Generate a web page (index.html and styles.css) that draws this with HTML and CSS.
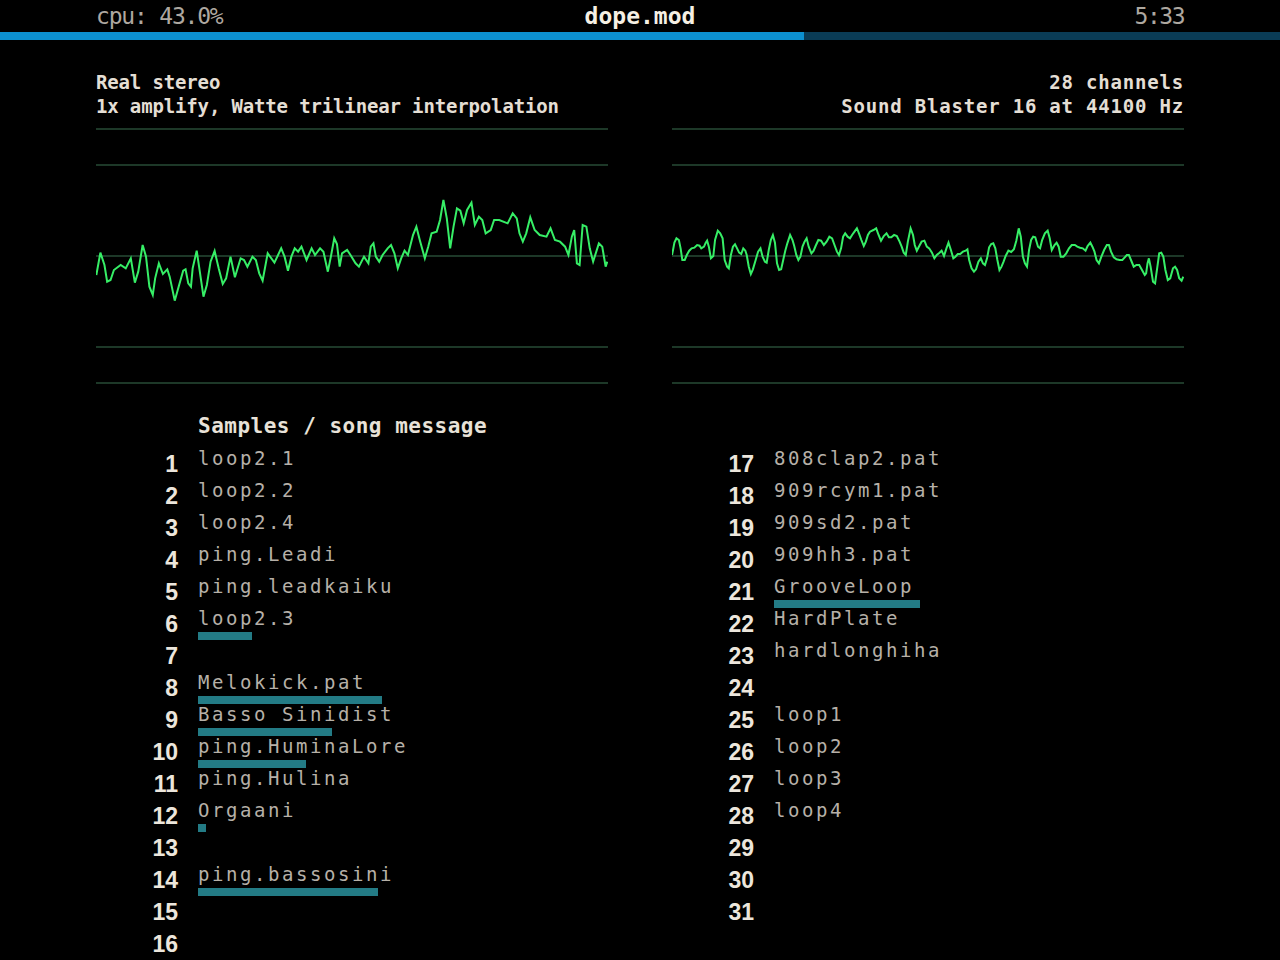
FILE: index.html
```html
<!DOCTYPE html>
<html lang="en">
<head>
<meta charset="utf-8">
<title>dope.mod</title>
<link rel="stylesheet" href="styles.css">
</head>
<body>
<header class="topbar">
  <span class="cpu">cpu: 43.0%</span>
  <span class="song">dope.mod</span>
  <span class="time">5:33</span>
</header>
<div class="progress"><div class="progress-fill" style="width:804px"></div></div>

<section class="info">
  <div class="info-left">
    <div>Real stereo</div>
    <div>1x amplify, Watte trilinear interpolation</div>
  </div>
  <div class="info-right">
    <div>28 channels</div>
    <div>Sound Blaster 16 at 44100 Hz</div>
  </div>
</section>

<section class="scopes">
  <svg class="scope" width="512" height="280" viewBox="47 0 1515 840" preserveAspectRatio="none">
    <g class="grid">
      <line x1="47" x2="1562" y1="27" y2="27"/>
      <line x1="47" x2="1562" y1="135" y2="135"/>
      <line x1="47" x2="1562" y1="408" y2="408"/>
      <line x1="47" x2="1562" y1="681" y2="681"/>
      <line x1="47" x2="1562" y1="789" y2="789"/>
    </g>
    <polyline class="wave" points="48,465 60,398 72,435 80,485 90,480 100,450 120,435 135,445 150,415 162,488 172,455 185,375 195,410 205,500 215,525 222,475 233,430 245,462 258,448 265,470 280,542 293,495 305,452 312,448 320,490 328,500 333,445 345,392 352,440 365,530 375,495 386,425 398,393 410,445 422,492 432,475 445,410 458,472 475,415 485,420 495,440 510,410 520,420 530,460 540,482 555,400 575,428 595,385 605,410 615,452 625,410 635,385 645,395 655,380 670,420 685,385 695,405 710,385 720,395 733,455 742,410 752,355 760,372 768,440 775,400 790,390 800,405 815,430 825,440 840,410 853,430 860,380 868,370 875,410 885,425 895,405 910,385 920,375 930,400 940,445 950,415 960,392 970,405 985,345 995,320 1005,360 1020,415 1030,380 1040,340 1055,335 1065,300 1075,240 1085,295 1095,385 1105,320 1115,265 1125,272 1135,310 1145,270 1158,248 1168,315 1180,290 1190,300 1200,340 1215,330 1225,300 1240,300 1265,310 1280,280 1292,295 1300,340 1310,365 1320,340 1332,292 1345,330 1360,345 1380,350 1392,325 1405,360 1420,365 1435,380 1445,405 1455,350 1462,330 1470,430 1478,435 1487,315 1498,320 1508,385 1518,425 1535,370 1545,380 1555,440 1560,425"/>
  </svg>
  <svg class="scope" width="512" height="280" viewBox="35 0 1487 840" preserveAspectRatio="none">
    <g class="grid">
      <line x1="35" x2="1522" y1="27" y2="27"/>
      <line x1="35" x2="1522" y1="135" y2="135"/>
      <line x1="35" x2="1522" y1="408" y2="408"/>
      <line x1="35" x2="1522" y1="681" y2="681"/>
      <line x1="35" x2="1522" y1="789" y2="789"/>
    </g>
    <polyline class="wave" points="35,405 38,390 42,368 48,355 55,360 60,385 65,420 72,420 78,405 85,392 92,385 100,383 108,375 115,377 120,385 128,380 133,368 137,362 142,380 148,415 155,408 160,360 168,332 175,340 182,355 188,420 195,440 200,445 206,405 212,380 218,373 224,385 230,398 236,402 242,385 248,392 252,405 258,440 264,462 270,448 278,420 285,395 292,385 298,410 305,425 310,428 316,390 322,360 328,345 334,368 340,430 346,450 352,448 358,420 364,392 370,370 378,345 385,360 390,378 396,405 402,420 408,410 414,380 420,365 426,355 432,380 440,400 446,393 452,378 460,360 468,362 476,375 484,365 492,350 500,355 508,378 514,395 520,405 526,385 532,350 538,340 545,350 552,355 558,345 565,335 572,325 578,340 585,360 592,378 598,365 604,345 610,335 620,330 628,325 635,345 642,362 650,348 658,340 665,352 672,352 680,345 688,348 696,365 702,380 708,398 714,405 720,365 728,325 735,345 740,375 746,392 752,380 760,365 768,362 775,380 782,385 790,398 797,415 804,405 812,398 818,392 825,408 832,385 838,368 845,390 852,415 858,410 865,402 872,402 880,395 888,392 893,388 898,420 905,445 912,455 918,448 925,425 932,415 938,430 944,435 950,415 956,382 962,372 968,370 974,385 980,420 986,450 992,440 998,425 1004,408 1012,392 1020,396 1028,388 1035,362 1042,325 1048,350 1054,410 1060,430 1066,440 1072,390 1078,360 1084,350 1090,352 1098,380 1104,385 1110,360 1118,340 1126,332 1132,355 1138,390 1146,375 1152,368 1158,380 1164,410 1172,410 1180,400 1188,385 1196,375 1205,375 1212,380 1220,383 1228,385 1236,392 1242,378 1250,368 1256,380 1262,395 1268,420 1275,430 1282,410 1290,390 1298,375 1304,375 1310,395 1318,412 1326,418 1335,420 1343,420 1350,412 1356,405 1362,405 1368,420 1376,440 1384,435 1392,435 1400,450 1408,465 1412,460 1416,430 1420,415 1425,440 1432,485 1438,490 1444,445 1450,400 1456,398 1462,410 1468,450 1475,480 1482,475 1490,445 1496,440 1502,450 1508,475 1515,482 1520,470"/>
  </svg>
</section>

<section class="samples">
  <div class="samples-title">Samples / song message</div>
  <div class="columns">
    <ol class="col">
      <li class="row"><span class="num">1</span><div class="cell"><div class="name">loop2.1</div></div></li>
      <li class="row"><span class="num">2</span><div class="cell"><div class="name">loop2.2</div></div></li>
      <li class="row"><span class="num">3</span><div class="cell"><div class="name">loop2.4</div></div></li>
      <li class="row"><span class="num">4</span><div class="cell"><div class="name">ping.Leadi</div></div></li>
      <li class="row"><span class="num">5</span><div class="cell"><div class="name">ping.leadkaiku</div></div></li>
      <li class="row"><span class="num">6</span><div class="cell"><div class="name">loop2.3</div><div class="bar" style="width:54px"></div></div></li>
      <li class="row"><span class="num">7</span><div class="cell"><div class="name"></div></div></li>
      <li class="row"><span class="num">8</span><div class="cell"><div class="name">Melokick.pat</div><div class="bar" style="width:184px"></div></div></li>
      <li class="row"><span class="num">9</span><div class="cell"><div class="name">Basso Sinidist</div><div class="bar" style="width:134px"></div></div></li>
      <li class="row"><span class="num">10</span><div class="cell"><div class="name">ping.HuminaLore</div><div class="bar" style="width:108px"></div></div></li>
      <li class="row"><span class="num">11</span><div class="cell"><div class="name">ping.Hulina</div></div></li>
      <li class="row"><span class="num">12</span><div class="cell"><div class="name">Orgaani</div><div class="bar" style="width:8px"></div></div></li>
      <li class="row"><span class="num">13</span><div class="cell"><div class="name"></div></div></li>
      <li class="row"><span class="num">14</span><div class="cell"><div class="name">ping.bassosini</div><div class="bar" style="width:180px"></div></div></li>
      <li class="row"><span class="num">15</span><div class="cell"><div class="name"></div></div></li>
      <li class="row"><span class="num">16</span><div class="cell"><div class="name"></div></div></li>
    </ol>
    <ol class="col">
      <li class="row"><span class="num">17</span><div class="cell"><div class="name">808clap2.pat</div></div></li>
      <li class="row"><span class="num">18</span><div class="cell"><div class="name">909rcym1.pat</div></div></li>
      <li class="row"><span class="num">19</span><div class="cell"><div class="name">909sd2.pat</div></div></li>
      <li class="row"><span class="num">20</span><div class="cell"><div class="name">909hh3.pat</div></div></li>
      <li class="row"><span class="num">21</span><div class="cell"><div class="name">GrooveLoop</div><div class="bar" style="width:146px"></div></div></li>
      <li class="row"><span class="num">22</span><div class="cell"><div class="name">HardPlate</div></div></li>
      <li class="row"><span class="num">23</span><div class="cell"><div class="name">hardlonghiha</div></div></li>
      <li class="row"><span class="num">24</span><div class="cell"><div class="name"></div></div></li>
      <li class="row"><span class="num">25</span><div class="cell"><div class="name">loop1</div></div></li>
      <li class="row"><span class="num">26</span><div class="cell"><div class="name">loop2</div></div></li>
      <li class="row"><span class="num">27</span><div class="cell"><div class="name">loop3</div></div></li>
      <li class="row"><span class="num">28</span><div class="cell"><div class="name">loop4</div></div></li>
      <li class="row"><span class="num">29</span><div class="cell"><div class="name"></div></div></li>
      <li class="row"><span class="num">30</span><div class="cell"><div class="name"></div></div></li>
      <li class="row"><span class="num">31</span><div class="cell"><div class="name"></div></div></li>
    </ol>
  </div>
</section>
</body>
</html>
```

FILE: styles.css
```css
html, body {
  margin: 0;
  padding: 0;
  background: #000;
  width: 1280px;
  height: 960px;
  overflow: hidden;
}

body {
  font-family: "DejaVu Sans Mono", "Liberation Mono", monospace;
  color: #e4ded4;
}

/* ---- top bar ---- */
.topbar {
  display: grid;
  grid-template-columns: 1fr auto 1fr;
  align-items: center;
  height: 32px;
  padding: 0 96px;
  line-height: 32px;
  font-size: 23px;
}

.cpu {
  color: #aea8a0;
  letter-spacing: -1.2px;
}

.song {
  color: #f6f0e4;
  font-weight: bold;
  font-size: 23px;
}

.time {
  justify-self: end;
  color: #aea8a0;
  letter-spacing: -1.5px;
}

.progress {
  height: 8px;
  background: #0a3c56;
  display: flex;
}

.progress-fill {
  height: 8px;
  background: #0c90d0;
}

/* ---- info ---- */
.info {
  display: grid;
  grid-template-columns: 512px 512px;
  column-gap: 64px;
  padding: 30px 96px 0;
  font-size: 19px;
  font-weight: bold;
  line-height: 24px;
  color: #e4ded4;
}

.info-left {
  letter-spacing: -0.15px;
}

.info-right {
  text-align: right;
  letter-spacing: 0.8px;
}

/* ---- scopes ---- */
.scopes {
  display: grid;
  grid-template-columns: 512px 512px;
  column-gap: 64px;
  padding: 2px 96px 0;
}

.scope {
  display: block;
}

.grid line {
  stroke: #1d3828;
  stroke-width: 2;
  vector-effect: non-scaling-stroke;
  shape-rendering: crispEdges;
}

.wave {
  fill: none;
  stroke: #36ee66;
  stroke-width: 2;
  stroke-linejoin: miter;
  vector-effect: non-scaling-stroke;
}

/* ---- samples ---- */
.samples {
  padding: 0 96px;
}

.samples-title {
  margin: 10px 0 6px 102px;
  font-size: 21px;
  font-weight: bold;
  line-height: 32px;
  letter-spacing: 0.5px;
  color: #e8e2d8;
}

.columns {
  display: grid;
  grid-template-columns: 512px 512px;
  column-gap: 64px;
}

.col {
  list-style: none;
  margin: 0;
  padding: 0;
}

.row {
  display: grid;
  grid-template-columns: 82px 1fr;
  column-gap: 20px;
  height: 32px;
}

.num {
  text-align: right;
  font-family: "Liberation Sans", Arial, sans-serif;
  font-weight: bold;
  font-size: 23px;
  line-height: 32px;
  color: #ece6dc;
}

.cell {
  display: flex;
  flex-direction: column;
  align-items: flex-start;
}

.name {
  height: 20px;
  font-size: 19px;
  line-height: 20px;
  letter-spacing: 2.56px;
  color: #b6b0a8;
  white-space: pre;
}

.bar {
  height: 8px;
  margin-top: 4px;
  background: #237b85;
}
```
